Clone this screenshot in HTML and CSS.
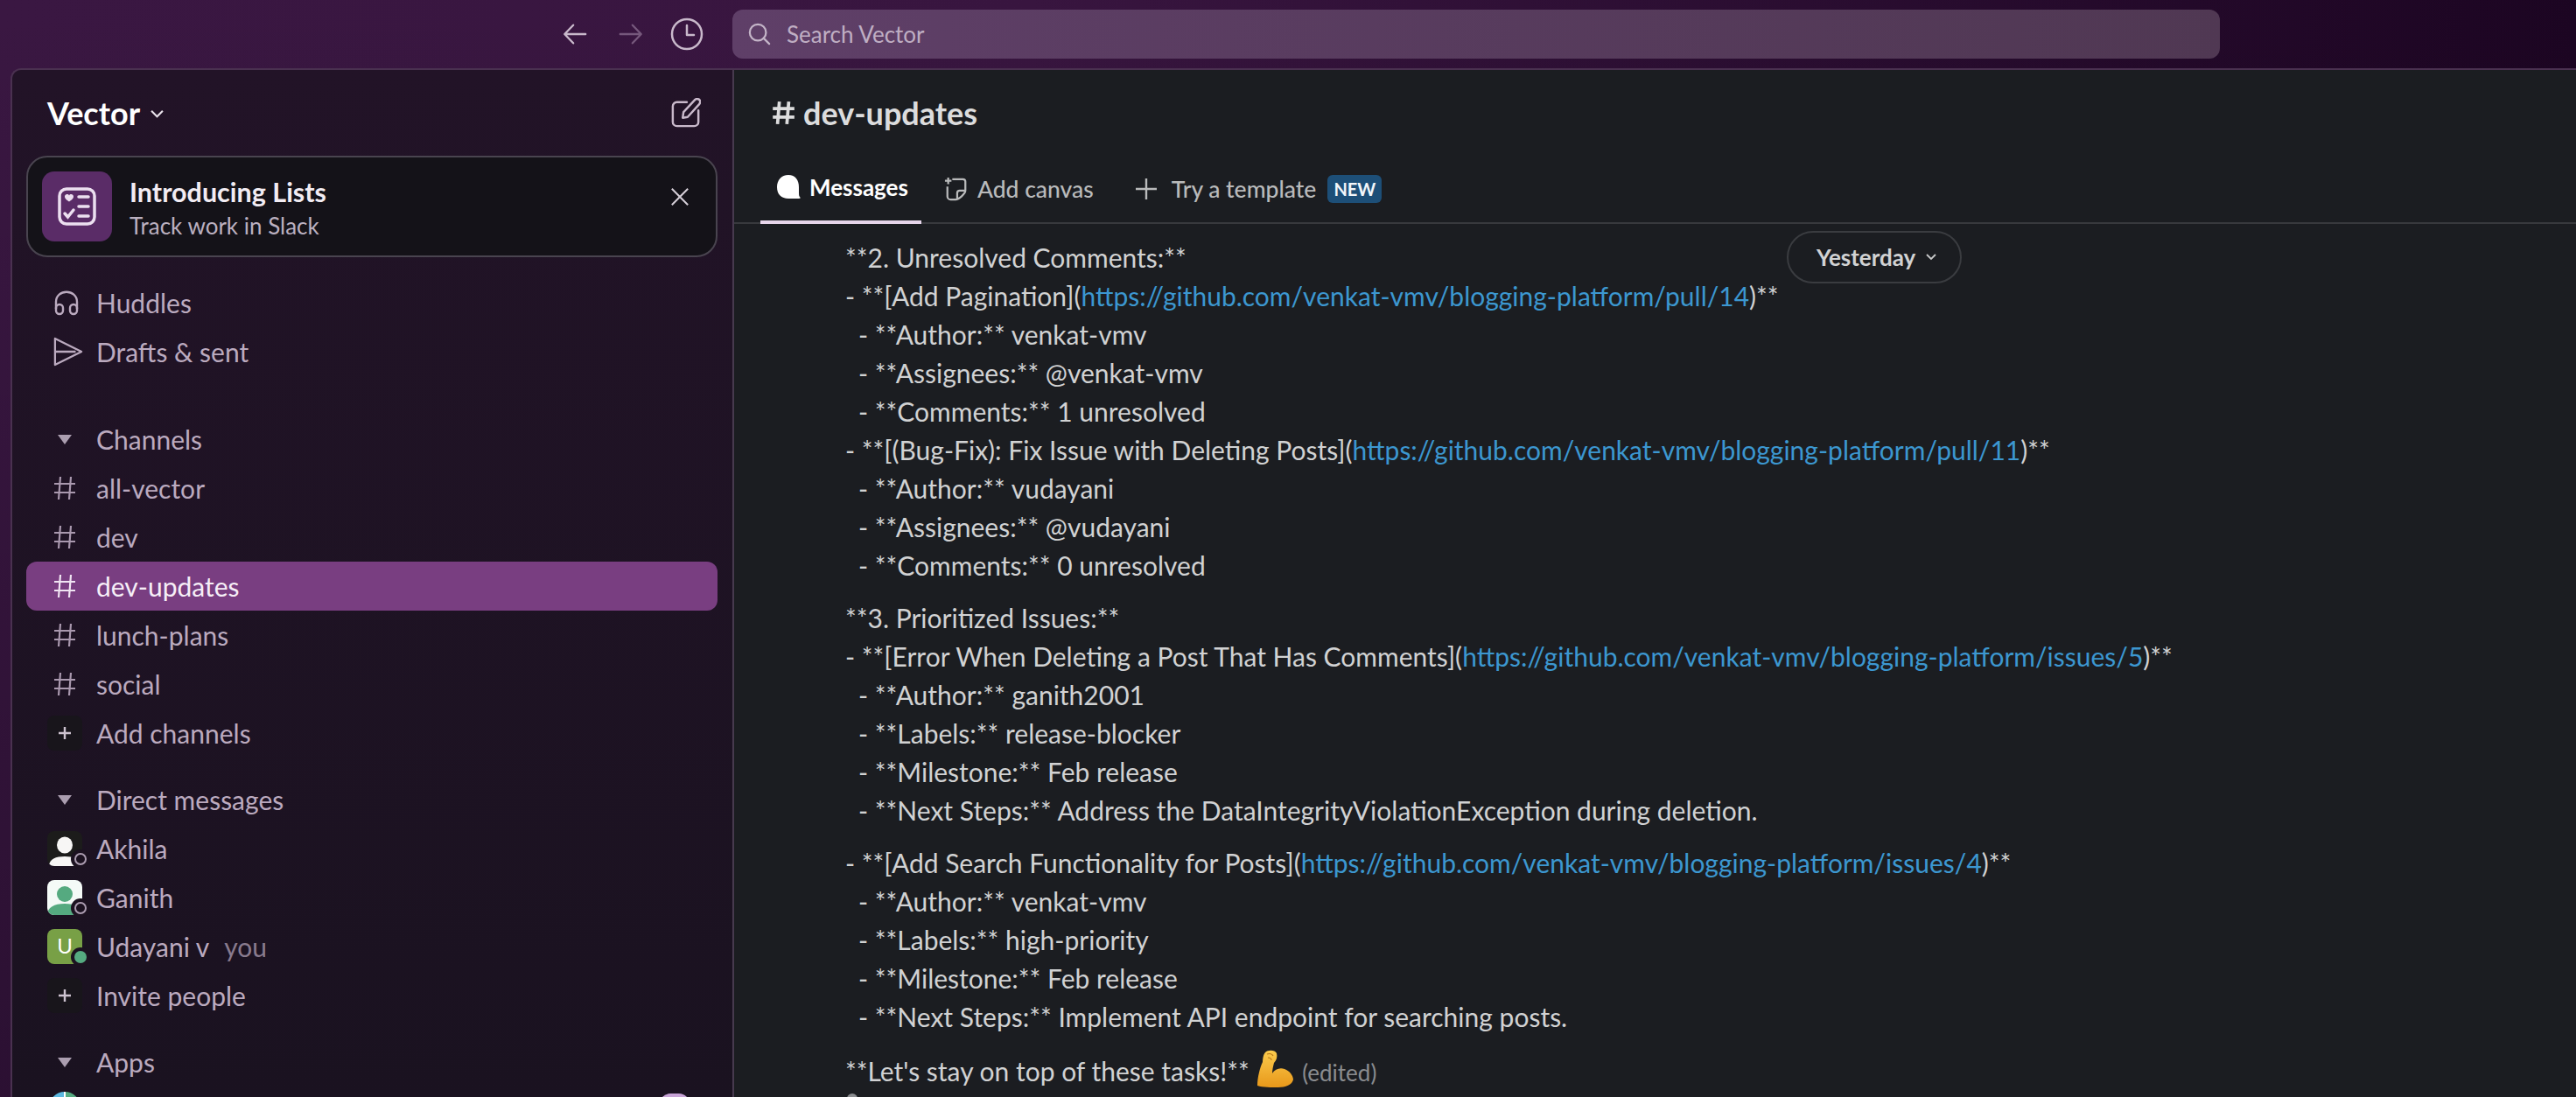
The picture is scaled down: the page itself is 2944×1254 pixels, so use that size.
FILE: index.html
```html
<!DOCTYPE html>
<html lang="en">

<head>
    <title>dev-updates - Vector - Slack</title>
    <link rel="stylesheet" href="styles.css">
</head>

<body>
    <header class="topbar">
        <div class="history">
            <svg class="nav-icon" viewBox="0 0 32 32"><path d="M29 16H4M14 5 3.500 16 14 27"/></svg>
            <svg class="nav-icon dim" viewBox="0 0 32 32"><path d="M3 16h25M18 5l10.500 11L18 27"/></svg>
            <svg class="nav-icon clock" viewBox="0 0 38 38"><circle cx="19" cy="19" r="17"/><path d="M19 9v11h8"/></svg>
        </div>
        <div class="search">
            <svg class="search-icon" viewBox="0 0 28 28"><circle cx="12" cy="12" r="10"/><path d="m19 19 7 7"/></svg>
            <span>Search Vector</span>
        </div>
    </header>

    <div class="app">
        <aside class="sidebar">
            <div class="workspace">
                <span class="workspace-name">Vector</span>
                <svg class="workspace-caret" viewBox="0 0 14 10"><path d="m1 1.500 6 6 6-6"/></svg>
                <svg class="compose" viewBox="0 0 36 36"><path d="M19 5H7a5 5 0 0 0-5 5v19a5 5 0 0 0 5 5h21a5 5 0 0 0 5-5V15"/><path d="m14 24 1-7L29 2c1.500-1.500 6-1 6 2 .300 1.500-.5 3-1 3.500L20 23z"/></svg>
            </div>

            <div class="promo">
                <div class="promo-tile">
                    <svg viewBox="0 0 44 44" width="44" height="44">
                        <rect x="2" y="2" width="40" height="40" rx="8" class="promo-box"/>
                        <path class="promo-fill" d="M13 16.500c-4-2.500-5-4-5-6 0-2.800 4-3.500 5-1 1-2.500 5-1.800 5 1 0 2-1 3.500-5 6z"/>
                        <path class="promo-line" d="M24 11h11M24 22h11M24 33h11M8 30l3.500 4L18 26"/>
                    </svg>
                </div>
                <div class="promo-text">
                    <div class="promo-title">Introducing Lists</div>
                    <div class="promo-sub">Track work in Slack</div>
                </div>
                <svg class="promo-close" viewBox="0 0 24 24"><path d="m2 2 20 20M22 2 2 22"/></svg>
            </div>

            <nav class="nav-top">
                <div class="row">
                    <svg class="row-icon" viewBox="0 0 30 30"><path d="M3 22V14C3 -1 27 -1 27 14v8"/><rect x="3" y="17" width="8" height="11" rx="4"/><rect x="19" y="17" width="8" height="11" rx="4"/></svg>
                    <span>Huddles</span>
                </div>
                <div class="row">
                    <svg class="row-icon wide" viewBox="0 0 36 36"><path d="M2 2 34 18 2 34 2 2zM2 18h25"/></svg>
                    <span>Drafts &amp; sent</span>
                </div>
            </nav>

            <nav class="section">
                <div class="row"><i class="caret"></i><span>Channels</span></div>
                <div class="row"><svg class="hash" viewBox="0 0 26 28"><path d="M8 1 6 27M20 1l-2 26M1 9h24M1 19h24"/></svg><span>all-vector</span></div>
                <div class="row"><svg class="hash" viewBox="0 0 26 28"><path d="M8 1 6 27M20 1l-2 26M1 9h24M1 19h24"/></svg><span>dev</span></div>
                <div class="row active"><svg class="hash" viewBox="0 0 26 28"><path d="M8 1 6 27M20 1l-2 26M1 9h24M1 19h24"/></svg><span>dev-updates</span></div>
                <div class="row"><svg class="hash" viewBox="0 0 26 28"><path d="M8 1 6 27M20 1l-2 26M1 9h24M1 19h24"/></svg><span>lunch-plans</span></div>
                <div class="row"><svg class="hash" viewBox="0 0 26 28"><path d="M8 1 6 27M20 1l-2 26M1 9h24M1 19h24"/></svg><span>social</span></div>
                <div class="row"><b class="plus-box"><svg viewBox="0 0 14 14"><path d="M7 0v14M0 7h14"/></svg></b><span>Add channels</span></div>
            </nav>

            <nav class="section">
                <div class="row"><i class="caret"></i><span>Direct messages</span></div>
                <div class="row">
                    <div class="avatar avatar-dark">
                        <svg viewBox="0 0 40 40"><ellipse cx="20" cy="16" rx="9" ry="9.500"/><path d="M2 40c0-8 8-11 18-11s18 3 18 11z"/></svg>
                        <i class="status"></i>
                    </div>
                    <span>Akhila</span>
                </div>
                <div class="row">
                    <div class="avatar avatar-light">
                        <svg viewBox="0 0 40 40"><circle cx="20" cy="16" r="9"/><path d="M0 40c0-9 8-13 20-13s20 4 20 13z"/></svg>
                        <i class="status"></i>
                    </div>
                    <span>Ganith</span>
                </div>
                <div class="row">
                    <div class="avatar avatar-green">U<i class="status online"></i></div>
                    <span>Udayani v</span><span class="you">you</span>
                </div>
                <div class="row"><b class="plus-box"><svg viewBox="0 0 14 14"><path d="M7 0v14M0 7h14"/></svg></b><span>Invite people</span></div>
            </nav>

            <nav class="section">
                <div class="row"><i class="caret"></i><span>Apps</span></div>
                <div class="row">
                    <div class="avatar app-logo"></div>
                    <i class="app-badge"></i>
                </div>
            </nav>
        </aside>

        <main class="main">
            <h1 class="channel-title"><svg class="title-hash" viewBox="0 0 26 28"><path d="M9 2 7 26M19 2l-2 24M2 9.500h23M2 18.500h23"/></svg>dev-updates</h1>

            <div class="tabs">
                <div class="tab current">
                    <svg class="tab-icon" viewBox="0 0 28 30"><path d="M14 1C6 1 1 7 1 15c0 8 5 13 13 13h12c2 0 2-1 1-2-1-1-1-3-1-11C26 7 22 1 14 1z"/></svg>
                    Messages
                </div>
                <div class="tab">
                    <svg class="tab-icon line" viewBox="0 0 30 30"><path d="M10 3h13a3 3 0 0 1 3 3v11c0 4-8 11-12 11H8a4 4 0 0 1-4-4V12M26 17h-7a3 3 0 0 0-3 3v7M1 5h8M5 1v8"/></svg>
                    Add canvas
                </div>
                <div class="tab template">
                    <svg class="tab-icon line plus" viewBox="0 0 26 26"><path d="M13 1v24M1 13h24"/></svg>
                    Try a template
                    <span class="new">NEW</span>
                </div>
            </div>

            <div class="messages">
                <div class="day-pill">Yesterday<svg viewBox="0 0 12 8"><path d="m1 1 5 5 5-5"/></svg></div>

                <p class="para">
                    <span class="line">**2. Unresolved Comments:**</span>
                    <span class="line">- **[Add Pagination](<a href="#">https://github.com/venkat-vmv/blogging-platform/pull/14</a>)**</span>
                    <span class="line sub">- **Author:** venkat-vmv</span>
                    <span class="line sub">- **Assignees:** @venkat-vmv</span>
                    <span class="line sub">- **Comments:** 1 unresolved</span>
                    <span class="line">- **[(Bug-Fix): Fix Issue with Deleting Posts](<a href="#">https://github.com/venkat-vmv/blogging-platform/pull/11</a>)**</span>
                    <span class="line sub">- **Author:** vudayani</span>
                    <span class="line sub">- **Assignees:** @vudayani</span>
                    <span class="line sub">- **Comments:** 0 unresolved</span>
                </p>

                <p class="para">
                    <span class="line">**3. Prioritized Issues:**</span>
                    <span class="line">- **[Error When Deleting a Post That Has Comments](<a href="#">https://github.com/venkat-vmv/blogging-platform/issues/5</a>)**</span>
                    <span class="line sub">- **Author:** ganith2001</span>
                    <span class="line sub">- **Labels:** release-blocker</span>
                    <span class="line sub">- **Milestone:** Feb release</span>
                    <span class="line sub">- **Next Steps:** Address the DataIntegrityViolationException during deletion.</span>
                </p>

                <p class="para">
                    <span class="line">- **[Add Search Functionality for Posts](<a href="#">https://github.com/venkat-vmv/blogging-platform/issues/4</a>)**</span>
                    <span class="line sub">- **Author:** venkat-vmv</span>
                    <span class="line sub">- **Labels:** high-priority</span>
                    <span class="line sub">- **Milestone:** Feb release</span>
                    <span class="line sub">- **Next Steps:** Implement API endpoint for searching posts.</span>
                </p>

                <p class="para">
                    <span class="line">**Let's stay on top of these tasks!** <svg class="flex-emoji" viewBox="0 0 42 44">
                        <defs><linearGradient id="arm" x1="0" y1="0" x2="0" y2="1"><stop offset="0" stop-color="#fbcb4d"/><stop offset="1" stop-color="#e8981a"/></linearGradient></defs>
                        <path fill="url(#arm)" d="M9 3C12 0 20 0 22 4 23 8 22 12 19 15 18 19 17 23 17 27 20 22 26 20 31 22 37 24 41 30 41 34 40 40 32 43 24 43 16 43 6 43 0 41 0 32 3 20 6 14 6 10 7 5 9 3Z"/>
                        <path class="flex-shade" d="M11 5c3-1 6 0 7 2M12 9c2 0 4 1 4 3"/>
                    </svg> <span class="edited">(edited)</span></span>
                </p>
                <i class="cut-tip"></i>
            </div>
        </main>
    </div>
</body>

</html>
```

FILE: styles.css
```css
* {
    box-sizing: border-box;
}

html,
body {
    height: 100%;
}

body {
    margin: 0;
    overflow: hidden;
    font-family: Lato, "Open Sans", sans-serif;
    background: linear-gradient(180deg, transparent 0%, rgba(10, 0, 14, 0.3) 100%),
        linear-gradient(90deg, #3a1742 0%, #38153f 40%, #1c0522 100%);
}

svg {
    display: block;
    fill: none;
}

/* top bar */
.topbar {
    height: 78px;
    display: flex;
    align-items: center;
    padding-left: 642px;
}

.history {
    display: flex;
    align-items: center;
    width: 195px;
}

.nav-icon {
    width: 30px;
    height: 30px;
    margin-right: 34px;
    stroke: #c9b9cb;
    stroke-width: 2.500;
    stroke-linecap: round;
    stroke-linejoin: round;
}

.nav-icon.dim {
    stroke: #76587c;
}

.nav-icon.clock {
    width: 38px;
    height: 38px;
    margin-left: -4px;
    margin-right: 0;
}

.search {
    width: 1700px;
    height: 56px;
    display: flex;
    align-items: center;
    padding-left: 18px;
    border-radius: 12px;
    background: linear-gradient(90deg, #5f3f68, #503853);
    color: #bfaec3;
    font-size: 26px;
}

.search-icon {
    width: 26px;
    height: 28px;
    margin-right: 18px;
    stroke: #c4b5c8;
    stroke-width: 2.400;
    stroke-linecap: round;
}

/* main frame */
.app {
    display: flex;
    height: 1176px;
    margin-left: 12px;
    border-top: 2px solid #4a3150;
    border-left: 2px solid #4a3150;
    border-top-left-radius: 12px;
    overflow: hidden;
}

.sidebar {
    width: 825px;
    flex: none;
    padding: 0 17px 0 16px;
    overflow: hidden;
    border-right: 2px solid #473a4e;
    background: linear-gradient(180deg, #221327 0%, #1a1220 100%);
    color: #bbaabf;
    font-size: 30px;
}

.workspace {
    display: flex;
    align-items: center;
    height: 98px;
    padding: 0 19px 0 24px;
}

.workspace-name {
    color: #fff;
    font-size: 36px;
    font-weight: 700;
}

.workspace-caret {
    width: 15px;
    height: 11px;
    margin-left: 12px;
    margin-top: 2px;
    stroke: #e8e1ea;
    stroke-width: 2;
}

.compose {
    width: 34px;
    height: 34px;
    margin-left: auto;
    stroke: #c9b9cb;
    stroke-width: 2.600;
    stroke-linejoin: round;
    stroke-linecap: round;
}

/* promo banner */
.promo {
    display: flex;
    align-items: center;
    height: 116px;
    padding: 0 16px;
    border: 2px solid #49444f;
    border-radius: 24px;
    background: #141218;
}

.promo-tile {
    width: 80px;
    height: 80px;
    display: flex;
    align-items: center;
    justify-content: center;
    border-radius: 14px;
    background: #5a2c67;
}

.promo-box,
.promo-line {
    stroke: #ecdff0;
    stroke-width: 3.500;
    stroke-linecap: round;
}

.promo-fill {
    fill: #ecdff0;
}

.promo-text {
    margin-left: 20px;
    padding-top: 2px;
}

.promo-title {
    color: #f2ecf3;
    font-size: 30.500px;
    font-weight: 700;
    line-height: 42px;
}

.promo-sub {
    color: #bbb0c0;
    font-size: 26px;
    line-height: 36px;
}

.promo-close {
    width: 22px;
    height: 22px;
    margin-left: auto;
    margin-right: 14px;
    margin-top: -23px;
    stroke: #d6cfd8;
    stroke-width: 2.200;
}

/* sidebar rows */
.nav-top {
    margin-top: 24px;
}

.section {
    margin-top: 20px;
}

.nav-top + .section {
    margin-top: 44px;
}

.row {
    display: flex;
    align-items: center;
    height: 56px;
    padding-left: 29px;
    border-radius: 12px;
}

.row > span {
    margin-left: 16px;
}

.row-icon {
    width: 30px;
    height: 32px;
    margin-left: 2px;
    margin-right: 3px;
    stroke: #bbaabf;
    stroke-width: 2.400;
    stroke-linejoin: round;
}

.row-icon.wide {
    width: 34px;
    height: 34px;
    margin-right: -1px;
}

.row .hash {
    width: 26px;
    height: 28px;
    margin-left: 2px;
    margin-right: 7px;
    stroke: #a998ae;
    stroke-width: 2.200;
}

.caret {
    width: 0;
    height: 0;
    margin: 0 12px 0 7px;
    border-left: 8px solid transparent;
    border-right: 8px solid transparent;
    border-top: 11px solid #ab9eb0;
}

.plus-box {
    width: 40px;
    height: 40px;
    margin-left: -5px;
    display: flex;
    align-items: center;
    justify-content: center;
    border-radius: 8px;
    background: #18151b;
}

.plus-box svg {
    width: 14px;
    height: 14px;
    stroke: #cdc3d0;
    stroke-width: 2.400;
}

.active {
    background: #793e81;
    color: #f6eef7;
}

.active .hash {
    stroke: #f0e4f2;
}

.row > .you {
    margin-left: 17px;
    color: #897b8e;
}

/* avatars */
.avatar {
    position: relative;
    width: 40px;
    height: 40px;
    flex: none;
    margin-left: -5px;
    border-radius: 8px;
}

.avatar svg {
    width: 40px;
    height: 40px;
    border-radius: 8px;
}

.avatar-dark {
    background: #1c1c1b;
}

.avatar-dark svg {
    fill: #f7f6f5;
}

.avatar-light {
    background: #f4faf7;
}

.avatar-light svg {
    fill: #55aa80;
}

.avatar-green {
    background: #78a046;
    color: #fff;
    font-size: 24px;
    line-height: 38px;
    text-align: center;
}

.status {
    position: absolute;
    right: -5px;
    bottom: 1px;
    width: 14px;
    height: 14px;
    border: 2.500px solid #ab9cb0;
    border-radius: 50%;
    background: #1c1220;
    box-shadow: 0 0 0 4px #1c1220;
}

.status.online {
    border: 0;
    background: #55aa80;
}

.app-logo {
    align-self: flex-start;
    margin-top: 6px;
    margin-left: -3px;
    width: 36px;
    height: 36px;
    border-radius: 50%;
    background: linear-gradient(90deg, #5bb8e0 48%, #fff 48%, #fff 52%, #55aa80 52%);
}

.app-badge {
    align-self: flex-start;
    width: 34px;
    height: 40px;
    margin-top: 8px;
    margin-left: auto;
    margin-right: 32px;
    border-radius: 12px;
    background: #c7a3d6;
}

/* channel pane */
.main {
    flex: 1;
    min-width: 0;
    background: #1b1d21;
    color: #d1d2d3;
}

.channel-title {
    display: flex;
    align-items: center;
    height: 98px;
    margin: 0;
    padding-left: 42px;
    color: #dcdcdd;
    font-size: 36px;
    font-weight: 700;
}

.title-hash {
    width: 28px;
    height: 30px;
    margin-right: 9px;
    stroke: #dcdcdd;
    stroke-width: 3.500;
}

.tabs {
    display: flex;
    height: 78px;
    padding-left: 30px;
    border-bottom: 2px solid #38393d;
    font-size: 26.500px;
    color: #b9babb;
}

.tab {
    display: flex;
    align-items: center;
    height: 78px;
    padding: 0 15px 2px 18px;
    font-weight: 500;
}

.tab + .tab {
    padding-left: 26px;
}

.tab + .template {
    padding-left: 32px;
}

.tab.current {
    border-bottom: 4px solid #e6d5ea;
    color: #fff;
    font-size: 26px;
    font-weight: 700;
}

.tab-icon {
    width: 28px;
    height: 30px;
    margin-right: 10px;
    fill: #fff;
}

.tab-icon.line {
    fill: none;
    stroke: #b9babb;
    stroke-width: 2.400;
    stroke-linejoin: round;
}

.tab-icon.plus {
    width: 26px;
    height: 26px;
    margin-right: 16px;
}

.new {
    display: flex;
    align-items: center;
    height: 32px;
    margin-left: 13px;
    padding: 0 7px;
    border-radius: 6px;
    background: #1d4f78;
    color: #f2f6fa;
    font-size: 20px;
    font-weight: 700;
}

/* message body */
.messages {
    position: relative;
    padding: 16px 0 0 127px;
    font-size: 30px;
    line-height: 44px;
    color: #d1d2d3;
}

.para {
    margin: 0 0 16px;
}

.line {
    display: block;
}

.sub {
    padding-left: 15px;
}

.line a {
    color: #3c97d0;
    text-decoration: none;
}

.flex-emoji {
    display: inline-block;
    width: 44px;
    height: 44px;
    margin-left: 1px;
    vertical-align: -8px;
}

.flex-shade {
    stroke: #b87a18;
    stroke-width: 1.200;
}

.edited {
    color: #8a8c8f;
    font-size: 26px;
}

.cut-tip {
    display: block;
    width: 12px;
    height: 12px;
    margin: -14px 0 0 2px;
    border-radius: 50%;
    background: #8a8c8f;
}

.day-pill {
    position: absolute;
    top: 8px;
    left: 1203px;
    display: flex;
    align-items: center;
    height: 60px;
    padding: 0 27px 0 32px;
    border: 2px solid #3a3c40;
    border-radius: 30px;
    background: #1b1d21;
    color: #d1d2d3;
    font-size: 26px;
    font-weight: 700;
}

.day-pill svg {
    width: 12px;
    height: 8px;
    margin-left: 12px;
    stroke: #c8c9ca;
    stroke-width: 1.800;
}
```
